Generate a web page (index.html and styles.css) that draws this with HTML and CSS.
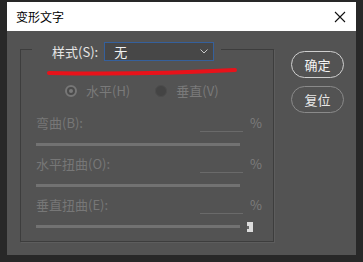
FILE: index.html
```html
<!DOCTYPE html>
<html lang="zh-CN">
<head>
    <meta charset="UTF-8">
    <meta name="viewport" content="width=device-width, initial-scale=1.0">
    <title>变形文字</title>
    <link rel="stylesheet" href="styles.css">
</head>
<body>
    <div class="dialog">
        <div class="titlebar">
            <span class="title">变形文字</span>
            <svg class="close" width="12" height="12" viewBox="0 0 12 12">
                <path d="M1 1 L11 11 M11 1 L1 11" stroke="#111" stroke-width="1.1" fill="none"/>
            </svg>
        </div>

        <div class="body">
            <fieldset class="group">
                <legend class="style-legend">
                    <span class="style-field">
                        <label class="style-label">样式(S):</label>
                        <span class="select">
                            <span class="select-value">无</span>
                            <svg class="chevron" width="8" height="5" viewBox="0 0 8 5">
                                <path d="M0.5 0.5 L4 4 L7.5 0.5" stroke="#c8c8c8" stroke-width="1" fill="none"/>
                            </svg>
                        </span>
                    </span>
                </legend>

                <div class="orient">
                    <span class="radio checked"></span>
                    <span class="radio-text">水平(H)</span>
                    <span class="radio"></span>
                    <span class="radio-text">垂直(V)</span>
                </div>

                <div class="slider">
                    <div class="slider-row">
                        <span class="slider-label">弯曲(B):</span>
                        <span class="value"></span>
                        <span class="unit">%</span>
                    </div>
                    <div class="track-row"><span class="track"></span></div>
                </div>

                <div class="slider">
                    <div class="slider-row">
                        <span class="slider-label">水平扭曲(O):</span>
                        <span class="value"></span>
                        <span class="unit">%</span>
                    </div>
                    <div class="track-row"><span class="track"></span></div>
                </div>

                <div class="slider">
                    <div class="slider-row">
                        <span class="slider-label">垂直扭曲(E):</span>
                        <span class="value"></span>
                        <span class="unit">%</span>
                    </div>
                    <div class="track-row"><span class="track"></span><span class="thumb"></span></div>
                </div>
            </fieldset>

            <div class="buttons">
                <button class="btn primary">确定</button>
                <button class="btn">复位</button>
            </div>

            <svg class="mark" width="349" height="224" viewBox="7 31 349 224">
                <path d="M49 73 Q140 75 235 70" stroke="#e8121a" stroke-width="4" stroke-linecap="round" fill="none"/>
            </svg>
        </div>
    </div>
</body>
</html>
```

FILE: styles.css
```css
body {
    margin: 0;
    padding: 0;
    background: #282828;
    font-family: "Noto Sans CJK SC", "Liberation Sans", sans-serif;
}

.dialog {
    width: 349px;
    margin: 2px 0 0 7px;
}

.titlebar {
    height: 29px;
    background: #ffffff;
    display: flex;
    align-items: center;
    padding: 0 10px 0 9px;
}

.title {
    font-size: 12px;
    line-height: 16px;
    color: #000;
    flex: 1;
}

.close {
    display: block;
}

.body {
    position: relative;
    height: 224px;
    box-sizing: border-box;
    background: #535353;
    padding: 7px 0 0 13px;
    display: flex;
    align-items: flex-start;
}

.group {
    margin: 0;
    width: 254px;
    height: 204px;
    box-sizing: border-box;
    border: 1px solid #3d3d3d;
    box-shadow: 1px 1px 0 #5d5d5d;
    padding: 0 0 0 15px;
}

.style-legend {
    margin-left: -4px;
    padding: 4px 7px 0 20px;
}

.style-field {
    display: flex;
    align-items: center;
}

.style-label {
    font-size: 13px;
    line-height: 16px;
    color: #e6e6e6;
    margin-right: 6px;
}

.select {
    width: 110px;
    height: 19px;
    box-sizing: border-box;
    border: 1px solid #35609c;
    background: #474747;
    display: flex;
    align-items: center;
    padding: 0 5px 0 9px;
}

.select-value {
    flex: 1;
    font-size: 13px;
    line-height: 16px;
    color: #f2f2f2;
}

.chevron {
    display: block;
}

.orient {
    margin-top: 22px;
    padding-left: 29px;
    display: flex;
    align-items: center;
    height: 16px;
}

.radio {
    width: 12px;
    height: 12px;
    box-sizing: border-box;
    border-radius: 50%;
    background: #444;
    border: 1px solid #4c4c4c;
    position: relative;
}

.radio.checked {
    border: 2px solid #777;
    background: #4b4b4b;
}

.radio.checked::after {
    content: "";
    position: absolute;
    left: 2px;
    top: 2px;
    width: 4px;
    height: 4px;
    border-radius: 50%;
    background: #7a7a7a;
}

.radio-text {
    font-size: 13px;
    line-height: 16px;
    color: #7a7a7a;
    margin: 0 25px 0 9px;
}

.slider {
    margin-top: 16px;
    width: 224px;
}

.slider + .slider {
    margin-top: 10px;
}

.slider-row {
    display: flex;
    align-items: flex-start;
    height: 17px;
}

.slider-label {
    font-size: 13px;
    line-height: 16px;
    color: #777;
}

.value {
    margin-left: auto;
    width: 43px;
    height: 16px;
    border-bottom: 1px solid #6a6a6a;
}

.unit {
    width: 10px;
    margin-left: 7px;
    font-size: 13px;
    line-height: 16px;
    color: #7d7d7d;
}

.track-row {
    margin-top: 11px;
    height: 3px;
    display: flex;
    align-items: center;
}

.track {
    width: 204px;
    height: 3px;
    background: #727272;
}

.thumb {
    position: relative;
    margin-left: 7px;
    width: 6px;
    height: 10px;
    background: #dcdcdc;
    flex-shrink: 0;
}

.thumb::before {
    content: "";
    position: absolute;
    left: 0;
    top: 4px;
    width: 2px;
    height: 3px;
    background: #666;
}

.buttons {
    margin: 13px 0 0 17px;
    display: flex;
    flex-direction: column;
    gap: 8px;
}

.btn {
    width: 53px;
    height: 27px;
    border-radius: 14px;
    border: 1px solid #8a8a8a;
    background: #535353;
    color: #e8e8e8;
    font-family: "Noto Sans CJK SC", sans-serif;
    font-size: 13px;
    line-height: 16px;
    padding: 0;
}

.btn.primary {
    border-color: #cfcfcf;
    color: #f4f4f4;
}

.mark {
    position: absolute;
    left: 0;
    top: 0;
    pointer-events: none;
}
```
